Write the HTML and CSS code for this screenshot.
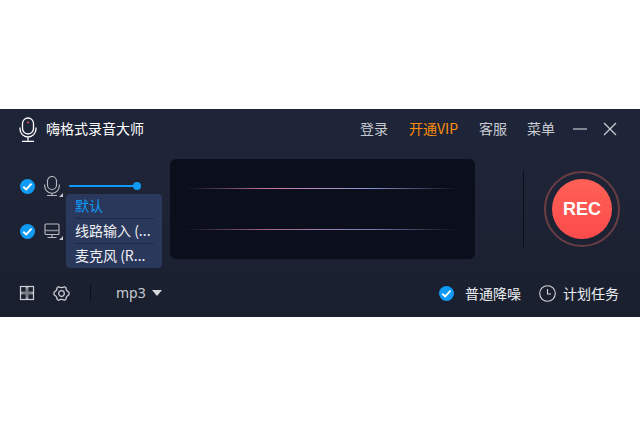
FILE: index.html
```html
<!DOCTYPE html>
<html lang="zh">
<head>
<meta charset="utf-8">
<title>嗨格式录音大师</title>
<link rel="stylesheet" href="styles.css">
</head>
<body>
<div class="app">
  <header class="top">
    <div class="brand">
      <svg class="logo" width="18" height="26" viewBox="0 0 18 26" fill="none" stroke="#fff" stroke-width="1.300">
        <rect x="3.500" y="1" width="11" height="16" rx="5.500"/>
        <path d="M1 10.500v1.500a8 8 0 0 0 16 0v-1.500M9 20v3.500M3 24.300h12"/>
        <circle cx="9" cy="5.500" r="1" fill="#e8505b" stroke="none"/>
      </svg>
      <span class="brand-name">嗨格式录音大师</span>
    </div>
    <nav class="nav">
      <span class="nav-item login">登录</span>
      <span class="nav-item vip">开通VIP</span>
      <span class="nav-item">客服</span>
      <span class="nav-item">菜单</span>
      <svg class="win min" width="14" height="14" viewBox="0 0 14 14" stroke="#c5c8ce" stroke-width="1.200"><path d="M0 7h14"/></svg>
      <svg class="win" width="14" height="14" viewBox="0 0 14 14" stroke="#c5c8ce" stroke-width="1.400" fill="none"><path d="M1 1l12 12M13 1L1 13"/></svg>
    </nav>
  </header>

  <main class="main">
    <section class="sources">
      <div class="source">
        <svg class="check" width="15" height="15" viewBox="0 0 14 14"><circle cx="7" cy="7" r="7" fill="#0f9bf5"/><path d="M3.100 7.200l2.700 2.500 5-5.300" fill="none" stroke="#fff" stroke-width="1.700"/></svg>
        <span class="device">
          <svg width="16" height="20" viewBox="0 0 16 20" fill="none" stroke="#b9bcc3" stroke-width="1.100"><rect x="3.500" y="0.500" width="9" height="13" rx="4.500"/><path d="M0.700 8.500v1.500a7.300 7.300 0 0 0 14.600 0v-1.500M8 17v2M3 19.500h10"/></svg>
          <i class="corner"></i>
        </span>
        <div class="slider"><i class="knob"></i></div>
      </div>
      <div class="source">
        <svg class="check" width="15" height="15" viewBox="0 0 14 14"><circle cx="7" cy="7" r="7" fill="#0f9bf5"/><path d="M3.100 7.200l2.700 2.500 5-5.300" fill="none" stroke="#fff" stroke-width="1.700"/></svg>
        <span class="device">
          <svg width="16" height="16" viewBox="0 0 16 16" fill="none" stroke="#b9bcc3" stroke-width="1.100"><rect x="1" y="1" width="14" height="10.500" rx="1"/><path d="M1 7.500h14" stroke="#8a8e96" stroke-width="1.500"/><path d="M8 11.500v3M3.500 14.500h9"/></svg>
          <i class="corner"></i>
        </span>
      </div>
      <ul class="menu">
        <li class="menu-item active">默认</li>
        <li class="menu-item">线路输入 (...</li>
        <li class="menu-item">麦克风 (R...</li>
      </ul>
    </section>

    <section class="scope">
      <i class="wave"></i>
      <i class="wave thin"></i>
    </section>

    <i class="divider"></i>

    <div class="rec-ring"><button class="rec">REC</button></div>
  </main>

  <footer class="bottom">
    <div class="tools">
      <svg class="tool" width="16" height="16" viewBox="0 0 16 16" fill="none"><path d="M8 1.500v13M1.500 8h13" stroke="#777b84" stroke-width="3"/><rect x="1.500" y="1.500" width="13" height="13" stroke="#d0d2d7" stroke-width="1.200"/><path d="M8 1.500v2M8 12.500v2M1.500 8h2M12.500 8h2" stroke="#d0d2d7" stroke-width="1.200"/></svg>
      <svg class="tool gear" width="17" height="17" viewBox="0 0 17 17" fill="none" stroke="#d0d2d7" stroke-width="1.200" stroke-linejoin="round"><path d="M5.500 1.700Q8.500 3.400 11.500 1.700L12.800 2.500Q12.900 5.800 16 7.300V9.700Q12.900 11.200 12.800 14.500L11.500 15.300Q8.500 13.600 5.500 15.300L4.200 14.500Q4.100 11.200 1 9.700V7.300Q4.100 5.800 4.200 2.500z"/><circle cx="8.500" cy="8.500" r="2.800"/></svg>
      <i class="sep"></i>
      <span class="format">mp3</span>
      <i class="caret"></i>
    </div>
    <div class="options">
      <svg class="check" width="15" height="15" viewBox="0 0 14 14"><circle cx="7" cy="7" r="7" fill="#0f9bf5"/><path d="M3.100 7.200l2.700 2.500 5-5.300" fill="none" stroke="#fff" stroke-width="1.700"/></svg>
      <span class="opt-label">普通降噪</span>
      <svg class="clock" width="17" height="17" viewBox="0 0 17 17" fill="none" stroke="#d5d7db" stroke-width="1.100"><circle cx="8.500" cy="8.500" r="7.800"/><path d="M8.500 4v5h3.500"/></svg>
      <span class="opt-label sched">计划任务</span>
    </div>
  </footer>
</div>
</body>
</html>
```

FILE: styles.css
```css
html, body {
  margin: 0;
  padding: 0;
  background: #fff;
}
body {
  height: 426px;
  padding-top: 109px;
  box-sizing: border-box;
  overflow: hidden;
  font-family: "Noto Sans CJK SC", "Liberation Sans", sans-serif;
}
.app {
  width: 640px;
  height: 208px;
  display: flex;
  flex-direction: column;
  background: linear-gradient(180deg, #1f2539 0%, #1e2436 40%, #1a1f2e 100%);
  color: #fff;
}
.top {
  height: 39px;
  display: flex;
  align-items: center;
  justify-content: space-between;
  padding: 0 23px 0 19px;
  flex: none;
}
.brand {
  display: flex;
  align-items: center;
  gap: 9px;
}
.logo {
  margin-top: 2px;
}
.brand-name {
  font-size: 14px;
  line-height: 20px;
  color: #fff;
  padding-bottom: 1px;
}
.nav {
  display: flex;
  align-items: center;
}
.nav-item {
  font-size: 14px;
  line-height: 20px;
  color: #c7cbd1;
  margin-right: 20px;
  padding-bottom: 1px;
}
.nav-item.login {
  margin-right: 21px;
}
.nav-item.vip {
  color: #fb8d0a;
  margin-right: 21px;
}
.nav-item:nth-child(4) {
  margin-right: 18px;
}
.win.min {
  margin-right: 16px;
}
.main {
  position: relative;
  flex: 1;
  display: flex;
  align-items: flex-start;
}
.sources {
  width: 170px;
  flex: none;
  padding: 28px 0 0 20px;
  box-sizing: border-box;
  display: flex;
  flex-direction: column;
  gap: 25px;
}
.source {
  display: flex;
  align-items: center;
  height: 20px;
}
.device {
  position: relative;
  display: flex;
  justify-content: center;
  width: 16px;
  margin-left: 9px;
}
.corner {
  position: absolute;
  right: -3px;
  bottom: -1px;
  width: 0;
  height: 0;
  border-style: solid;
  border-width: 0 0 4px 4px;
  border-color: transparent transparent #c5c8ce transparent;
}
.slider {
  position: relative;
  width: 68px;
  height: 2px;
  margin-left: 9px;
  background: #0f9bf5;
  border-radius: 1px;
}
.knob {
  position: absolute;
  right: -4px;
  top: -3px;
  width: 8px;
  height: 8px;
  border-radius: 50%;
  background: #0f9bf5;
}
.menu {
  position: absolute;
  left: 66px;
  top: 46px;
  width: 96px;
  height: 74px;
  margin: 0;
  padding: 0 9px;
  box-sizing: border-box;
  list-style: none;
  background: #2a385c;
  border-radius: 4px;
  z-index: 2;
}
.menu-item {
  height: 24px;
  font-size: 14px;
  line-height: 22px;
  color: #f0f1f4;
  white-space: nowrap;
  border-bottom: 1px solid #1f2a47;
  margin-right: -1px;
}
.menu-item:last-child {
  border-bottom: 0;
}
.menu-item.active {
  color: #0f9bf5;
}
.scope {
  width: 305px;
  height: 100px;
  margin-top: 11px;
  flex: none;
  background: #0a0f1b;
  border-radius: 6px;
  padding: 29px 18px 0 15px;
  box-sizing: border-box;
  display: flex;
  flex-direction: column;
  gap: 40px;
}
.wave {
  display: block;
  height: 1px;
  background: linear-gradient(90deg, rgba(200,110,150,0) 0%, #c274a0 30%, #b58ec8 50%, #8a94d0 68%, rgba(120,140,190,0) 100%);
}
.wave.thin {
  opacity: .85;
}
.divider {
  width: 1px;
  height: 76px;
  margin: 23px 0 0 48px;
  background: #0a0f1b;
  flex: none;
}
.rec-ring {
  width: 76px;
  height: 76px;
  margin: 23px 0 0 20px;
  border: 2px solid #6a3d45;
  border-radius: 50%;
  box-sizing: border-box;
  display: flex;
  align-items: center;
  justify-content: center;
  flex: none;
}
.rec {
  width: 60px;
  height: 60px;
  padding: 0;
  border: 0;
  border-radius: 50%;
  background: linear-gradient(180deg, #ff6155 0%, #fb4b4c 100%);
  color: #fff;
  font: bold 18px "Liberation Sans", sans-serif;
}
.bottom {
  height: 48px;
  flex: none;
  display: flex;
  align-items: center;
  justify-content: space-between;
  padding: 0 21px 0 19px;
}
.tools, .options {
  display: flex;
  align-items: center;
}
.gear {
  margin-left: 18px;
}
.sep {
  width: 1px;
  height: 17px;
  margin: 0 25px 0 20px;
  background: #0a0f1b;
}
.format {
  font-size: 14px;
  line-height: 20px;
  color: #c7cbd1;
  font-family: "Noto Sans", sans-serif;
}
.caret {
  margin-left: 6px;
  width: 0;
  height: 0;
  border-style: solid;
  border-width: 6px 5.500px 0;
  border-color: #d5d7db transparent transparent;
}
.opt-label {
  font-size: 14px;
  line-height: 20px;
  color: #eceef1;
  margin-left: 11px;
}
.clock {
  margin-left: 18px;
}
.opt-label.sched {
  margin-left: 7px;
}
```
